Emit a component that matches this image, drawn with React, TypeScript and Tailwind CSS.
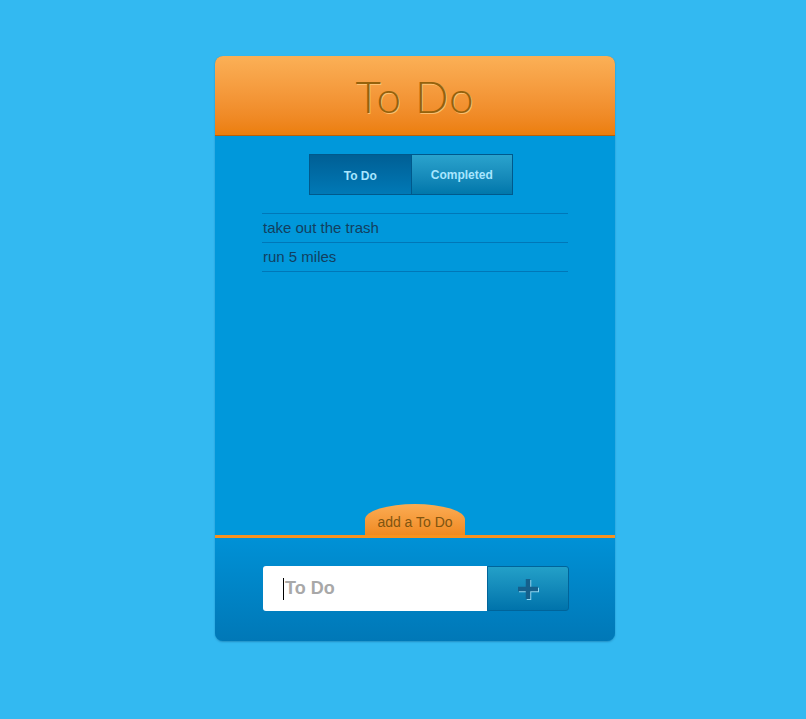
import { useState } from 'react'

const items = ['take out the trash', 'run 5 miles']

export default function App() {
  const [tab, setTab] = useState<'todo' | 'done'>('todo')

  return (
    <div className="min-h-[719px] w-full bg-[#33b9f1] pl-[24px] pt-[56px] font-['Liberation_Sans',Arial,sans-serif]">
      <div className="mx-auto flex h-[585px] w-[400px] flex-col overflow-hidden rounded-[8px] bg-[#0098db] shadow-[0_1px_2px_rgba(0,60,110,0.35)]">
        {/* Header */}
        <div className="flex h-[80px] shrink-0 items-center justify-center border-b border-[#b8600a] bg-gradient-to-b from-[#fbb056] to-[#ec7e0a]">
          <h1 className="font-['Lato',sans-serif] text-[44px] font-light leading-none tracking-[1px] text-[#94620c] [text-shadow:1px_1px_0_rgba(255,205,130,0.8)]">
            To Do
          </h1>
        </div>

        {/* Body */}
        <div className="flex flex-1 flex-col items-center pt-[18px]">
          <div className="mr-[8px] flex h-[41px] w-[204px] border border-[#00598c]">
            <button
              onClick={() => setTab('todo')}
              className={`flex flex-1 items-center justify-center border-r border-[#00598c] text-[12px] font-bold text-[#a8e6ff] ${
                tab === 'todo'
                  ? 'bg-gradient-to-b from-[#005f95] to-[#0079b6] pt-[2px]'
                  : 'bg-gradient-to-b from-[#2aa3cd] to-[#0077ab]'
              }`}
            >
              To Do
            </button>
            <button
              onClick={() => setTab('done')}
              className={`flex flex-1 items-center justify-center text-[12px] font-bold text-[#a8e6ff] ${
                tab === 'done'
                  ? 'bg-gradient-to-b from-[#005f95] to-[#0079b6] pt-[2px]'
                  : 'bg-gradient-to-b from-[#2aa3cd] to-[#0077ab]'
              }`}
            >
              Completed
            </button>
          </div>

          <ul className="mt-[18px] w-[306px] border-t border-[#0077b8]">
            {(tab === 'todo' ? items : []).map((item) => (
              <li
                key={item}
                className="flex h-[29px] items-center border-b border-[#0077b8] pl-[1px] text-[15px] text-[#123f60]"
              >
                {item}
              </li>
            ))}
          </ul>
        </div>

        {/* Add tab + divider */}
        <div className="flex shrink-0 justify-center border-b-[3px] border-[#f7921e]">
          <div className="flex h-[31px] w-[100px] items-end justify-center rounded-t-[50%] bg-gradient-to-b from-[#fbac52] to-[#f08a20] pb-[2px] text-[14px] text-[#80540f]">
            add a To Do
          </div>
        </div>

        {/* Footer */}
        <div className="flex h-[103px] shrink-0 items-center justify-center bg-gradient-to-b from-[#0091d6] to-[#0078b7] pb-[2px]">
          <div className="ml-[2px] flex h-[45px] w-[306px]">
            <div className="flex flex-1 items-center rounded-l-[3px] bg-white pl-[20px]">
              <span className="mr-[1px] h-[22px] w-px bg-black" />
              <span className="text-[18px] font-bold text-[#a8a8a8]">To Do</span>
            </div>
            <button className="relative flex w-[82px] items-center justify-center rounded-r-[3px] border border-[#00649a] bg-gradient-to-b from-[#23a0c8] to-[#0073ab]">
              <svg width="24" height="24" viewBox="0 0 24 24">
                <path d="M12 2v20M2 12h20" stroke="#8fd6f2" strokeWidth="4.5" transform="translate(1 1)" />
                <path d="M12 2v20M2 12h20" stroke="#15608c" strokeWidth="4.5" />
              </svg>
            </button>
          </div>
        </div>
      </div>
    </div>
  )
}
